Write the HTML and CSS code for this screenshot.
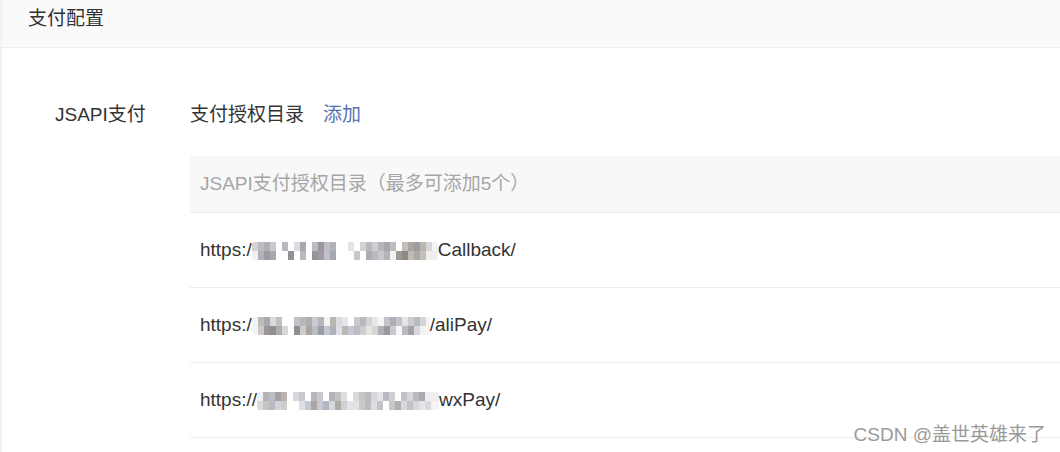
FILE: index.html
```html
<!DOCTYPE html>
<html lang="zh-CN">
<head>
  <meta charset="UTF-8" />
  <title>支付配置</title>
  <link rel="stylesheet" href="styles.css">
</head>
<body>
  <div class="panel">
    <div class="panel-head">支付配置</div>

    <div class="form-row">
      <div class="form-label">JSAPI支付</div>
      <div class="form-body">
        <div class="sub-title">
          <span>支付授权目录</span>
          <a class="link">添加</a>
        </div>

        <div class="dir-table">
          <div class="dir-head">JSAPI支付授权目录（最多可添加5个）</div>
          <div class="dir-row">https:/<span class="mask mask-a"></span>Callback/</div>
          <div class="dir-row">https:/<span class="mask mask-b"></span>/aliPay/</div>
          <div class="dir-row">https://<span class="mask mask-c"></span>wxPay/</div>
        </div>
      </div>
    </div>
  </div>

  <div class="watermark">CSDN @盖世英雄来了</div>
</body>
</html>
```

FILE: styles.css
```css
* {
  box-sizing: border-box;
}
html, body {
  margin: 0;
  padding: 0;
  height: 100%;
  background: #fff;
  overflow: hidden;
}
body {
  font-family: "Liberation Sans", "Noto Sans CJK SC", sans-serif;
  font-size: 19px;
  color: #333;
  position: relative;
}
.panel {
  height: 100%;
  border-left: 2px solid #f2f2f2;
}
.panel-head {
  height: 48px;
  padding: 7px 0 0 26px;
  line-height: 24px;
  background: #fafafa;
  border-bottom: 1px solid #ececec;
  color: #333;
}
.form-row {
  display: flex;
  padding-top: 55px;
}
.form-label {
  width: 188px;
  padding-left: 53px;
  line-height: 24px;
}
.form-body {
  flex: 1;
}
.sub-title {
  line-height: 24px;
  display: flex;
  gap: 19px;
}
.link {
  color: #5672b0;
  cursor: pointer;
}
.dir-table {
  margin-top: 29px;
}
.dir-head {
  height: 57px;
  line-height: 56px;
  padding-left: 10px;
  background: #f8f8f8;
  border-bottom: 1px solid #ececec;
  color: #a6a6a6;
}
.dir-row {
  height: 75px;
  line-height: 74px;
  padding-left: 10px;
  border-bottom: 1px solid #ececec;
  display: flex;
  align-items: center;
}
.mask {
  display: inline-block;
  height: 18px;
  margin-top: 2px;
  border-radius: 3px;
  background-repeat: no-repeat;
  background-size: 100% 9px, 100% 9px;
  background-position: 0 0, 0 9px;
}
.mask-a {
  width: 186px;
  background-image:
    linear-gradient(90deg, #d8d0d0 0 6px, #bcbcc2 6px 12px, #b0b0b8 12px 18px, #c8cad0 18px 24px, #fff 24px 30px, #b8b8be 30px 36px, #fff 36px 42px, #dcdce0 42px 48px, #a8a8ae 48px 54px, #fff 54px 60px, #bcbcc2 60px 66px, #9c969e 66px 72px, #bebec4 72px 78px, #b0b2ba 78px 84px, #fff 84px 96px, #e4e4e8 96px 102px, #fff 102px 108px, #d4d4d8 108px 114px, #bababa 114px 120px, #cccfd4 120px 126px, #b4b4ba 126px 132px, #a6a6ac 132px 138px, #bebec2 138px 144px, #fff 144px 150px, #c4bebb 150px 156px, #aca6a2 156px 162px, #9c9ca2 162px 168px, #bcb6b0 168px 174px, #d6d6d6 174px 180px, #f4f4f4 180px),
    linear-gradient(90deg, #f0f0f0 0 6px, #b2b0b6 6px 12px, #9c9aa2 12px 18px, #a8a8b0 18px 24px, #fff 24px 36px, #929298 36px 42px, #fff 42px 48px, #bab8be 48px 54px, #fff 54px 60px, #98949c 60px 66px, #a29aa2 66px 72px, #c2c0c6 72px 78px, #a6a8b0 78px 84px, #fff 84px 102px, #c8c8cc 102px 108px, #fff 108px 114px, #aeaeae 114px 120px, #b8bac0 120px 126px, #c6c8ce 126px 132px, #b2b2b8 132px 138px, #f2f2f2 138px 144px, #9c9894 144px 150px, #8e8a88 150px 156px, #bfbab6 156px 162px, #aca8a2 162px 168px, #c2beb8 168px 174px, #eee 174px);
}
.mask-b {
  width: 178px;
  background-image:
    linear-gradient(90deg, #f2f2f2 0 6px, #bebaba 6px 12px, #a8a8ae 12px 18px, #d8dae0 18px 24px, #c2bebe 24px 30px, #fff 30px 42px, #c2c2c8 42px 48px, #b6b6bc 48px 54px, #b0aeac 54px 60px, #cacad0 60px 66px, #b4b4ba 66px 72px, #f4f4f4 72px 78px, #bab6b2 78px 84px, #dcdce0 84px 90px, #e6e6ea 90px 96px, #fff 96px 102px, #cacace 102px 108px, #b8b8be 108px 114px, #d4d4d8 114px 120px, #e8e8e8 120px 126px, #f6f6f6 126px 132px, #c2c4ca 132px 138px, #aeaeb4 138px 144px, #c2c4ca 144px 150px, #e4e4e4 150px 156px, #cccccc 156px 162px, #b8bac0 162px 168px, #d6d6da 168px 174px, #f4f4f4 174px),
    linear-gradient(90deg, #f4f4f4 0 6px, #cec8c6 6px 12px, #9a9696 12px 18px, #8f8f93 18px 24px, #aeaeae 24px 30px, #d8d8d8 30px 36px, #fff 36px 42px, #8f8f93 42px 48px, #d2cac4 48px 54px, #a8a4a0 54px 60px, #babcc2 60px 66px, #9a9ca4 66px 72px, #c2c6ce 72px 78px, #b2b2b8 78px 84px, #dce0e8 84px 90px, #bab8b4 90px 96px, #c8c8ce 96px 102px, #babcc4 102px 108px, #cecccc 108px 114px, #e4e4e4 114px 120px, #d8d4d0 120px 126px, #b0afb6 126px 132px, #98989e 132px 138px, #c8cad0 138px 144px, #f6f6f6 144px 150px, #babac0 150px 156px, #a2a2a8 156px 162px, #d8d8dc 162px 168px, #f4f4f4 168px);
}
.mask-c {
  width: 182px;
  background-image:
    linear-gradient(90deg, #f0f0f0 0 6px, #b2b2b8 6px 12px, #bdbdc3 12px 18px, #a2a2a8 18px 24px, #b8b2ae 24px 30px, #fff 30px 36px, #d8d8dc 36px 42px, #c8cad0 42px 48px, #fff 48px 54px, #b6b6bc 54px 60px, #cacace 60px 66px, #fff 66px 72px, #b2b4ba 72px 78px, #c4c2c0 78px 84px, #dedee2 84px 90px, #fff 90px 96px, #dadade 96px 102px, #c8c6c4 102px 108px, #babac0 108px 114px, #d6d6da 114px 120px, #e4e4e8 120px 126px, #babac0 126px 132px, #d0d0d0 132px 138px, #fff 138px 144px, #c2c2c8 144px 150px, #d8d8d8 150px 156px, #bababa 156px 162px, #aaaab0 162px 168px, #eee 168px),
    linear-gradient(90deg, #dadade 0 6px, #c8c4c0 6px 12px, #b8bac0 12px 18px, #d4d4d8 18px 24px, #cecece 24px 30px, #fff 30px 42px, #dae0e6 42px 48px, #c4c8d0 48px 54px, #aaa6a4 54px 60px, #c6cad2 60px 66px, #b2b6c2 66px 72px, #d8d8d8 72px 78px, #aeaaa6 78px 84px, #d2d2d6 84px 90px, #e4e4e4 90px 102px, #cacace 102px 108px, #babac0 108px 114px, #dedee2 114px 120px, #c4c4c8 120px 126px, #fff 126px 132px, #c8c8c8 132px 138px, #aeaeb4 138px 144px, #d8d8dc 144px 150px, #c2c2c8 150px 156px, #d6d6da 156px 162px, #e6e6e6 162px 168px, #dadade 168px 174px, #f4f4f4 174px);
}
.watermark {
  position: absolute;
  right: 14px;
  bottom: 5px;
  font-size: 19px;
  line-height: 24px;
  color: #9a9a9a;
  text-shadow: 0 0 2px #fff, 0 0 2px #fff;
}
```
